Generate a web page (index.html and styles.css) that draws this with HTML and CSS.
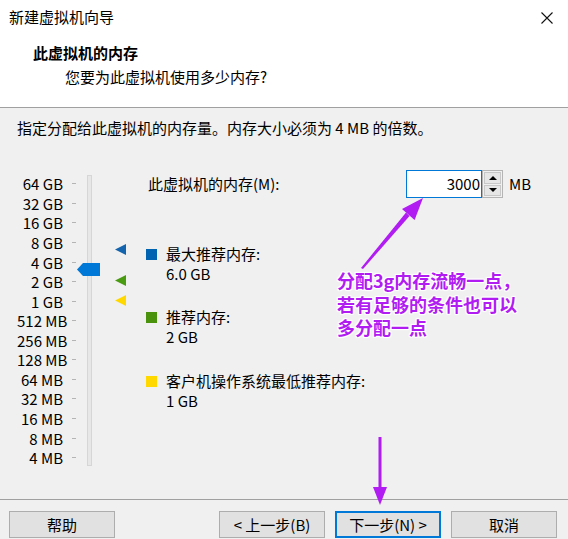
FILE: index.html
```html
<!DOCTYPE html>
<html lang="zh-CN">
<head>
<meta charset="utf-8">
<title>新建虚拟机向导</title>
<link rel="stylesheet" href="styles.css">
</head>
<body>
<div class="window">
  <div class="header">
    <div class="titlebar">
      <span class="title">新建虚拟机向导</span>
      <svg class="close" width="12" height="12" viewBox="0 0 12 12"><path d="M0.5 0.5 L11.5 11.5 M11.5 0.5 L0.5 11.5" stroke="#111" stroke-width="1.1" fill="none"/></svg>
    </div>
    <div class="head-title">此虚拟机的内存</div>
    <div class="head-sub">您要为此虚拟机使用多少内存?</div>
  </div>
  <div class="content">
    <div class="intro">指定分配给此虚拟机的内存量。内存大小必须为 4 MB 的倍数。</div>
    <div class="body">
      <div class="scale">
        <div class="row"><span class="lbl">64 GB</span><span class="tick"></span></div>
        <div class="row"><span class="lbl">32 GB</span><span class="tick"></span></div>
        <div class="row"><span class="lbl">16 GB</span><span class="tick"></span></div>
        <div class="row"><span class="lbl">8 GB</span><span class="tick"></span></div>
        <div class="row"><span class="lbl">4 GB</span><span class="tick"></span></div>
        <div class="row"><span class="lbl">2 GB</span><span class="tick"></span></div>
        <div class="row"><span class="lbl">1 GB</span><span class="tick"></span></div>
        <div class="row"><span class="lbl">512 MB</span><span class="tick"></span></div>
        <div class="row"><span class="lbl">256 MB</span><span class="tick"></span></div>
        <div class="row"><span class="lbl">128 MB</span><span class="tick"></span></div>
        <div class="row"><span class="lbl">64 MB</span><span class="tick"></span></div>
        <div class="row"><span class="lbl">32 MB</span><span class="tick"></span></div>
        <div class="row"><span class="lbl">16 MB</span><span class="tick"></span></div>
        <div class="row"><span class="lbl">8 MB</span><span class="tick"></span></div>
        <div class="row"><span class="lbl">4 MB</span><span class="tick"></span></div>
        <div class="track"></div>
        <div class="thumb"></div>
        <div class="marker m-max"></div>
        <div class="marker m-rec"></div>
        <div class="marker m-min"></div>
      </div>
      <div class="right">
        <div class="mem-row">
          <span class="mem-label">此虚拟机的内存(M):</span>
          <span class="input">3000</span>
          <span class="spin">
            <span class="spin-btn"><span class="tri-up"></span></span>
            <span class="spin-btn"><span class="tri-down"></span></span>
          </span>
          <span class="unit">MB</span>
        </div>
        <div class="legend first">
          <span class="sq sq-blue"></span>
          <div class="ltext">最大推荐内存:<br>6.0 GB</div>
        </div>
        <div class="legend">
          <span class="sq sq-green"></span>
          <div class="ltext">推荐内存:<br>2 GB</div>
        </div>
        <div class="legend third">
          <span class="sq sq-yellow"></span>
          <div class="ltext">客户机操作系统最低推荐内存:<br>1 GB</div>
        </div>
      </div>
    </div>
  </div>
  <div class="footer">
    <button class="btn">帮助</button>
    <div class="btn-group">
      <button class="btn">&lt; 上一步(B)</button>
      <button class="btn default">下一步(N) &gt;</button>
      <button class="btn">取消</button>
    </div>
  </div>
  <div class="note">分配3g内存流畅一点，<br>若有足够的条件也可以<br>多分配一点</div>
  <svg class="arrows" width="568" height="539" viewBox="0 0 568 539">
    <polygon points="361,268 363,269 409.5,216 406,212.5" fill="#b01cf2"/>
    <polygon points="423,198 414.6,220 402,209" fill="#b01cf2"/>
    <rect x="378.5" y="437" width="3" height="52" fill="#b01cf2"/>
    <polygon points="373,487 387,487 380,505" fill="#b01cf2"/>
  </svg>
</div>
</body>
</html>
```
FILE: styles.css
```css
* { box-sizing: border-box; }
html, body { margin: 0; padding: 0; }
body {
  width: 568px;
  height: 539px;
  overflow: hidden;
  background: #f0f0f0;
  font-family: "Noto Sans CJK SC", "Noto Sans", sans-serif;
  font-size: 15px;
  color: #000;
}
.window { position: relative; width: 568px; height: 539px; }

.header {
  height: 108px;
  background: #fff;
  border-bottom: 1px solid #a0a0a0;
}
.titlebar {
  height: 34px;
  display: flex;
  align-items: center;
  justify-content: space-between;
  padding: 0 15px 0 9px;
}
.title { line-height: 20px; color: #000; }
.close { display: block; margin-top: 1px; }
.head-title {
  margin-top: 9px;
  padding-left: 33px;
  font-weight: bold;
  line-height: 20px;
}
.head-sub {
  margin-top: 4px;
  padding-left: 65px;
  line-height: 20px;
}

.content {
  height: 391px;
  padding: 10px 0 0 17px;
}
.intro { line-height: 20px; }
.body {
  display: flex;
  margin-top: 32px;
}
.scale {
  position: relative;
  width: 129px;
  padding-top: 4px;
}
.row {
  display: flex;
  align-items: center;
  height: 19.57px;
}
.lbl {
  width: 46px;
  text-align: right;
  white-space: nowrap;
  line-height: 19px;
  color: #000;
}
.tick {
  width: 4px;
  height: 1px;
  margin-left: 9px;
  background: #b4b4b4;
}
.track {
  position: absolute;
  left: 70px;
  top: 5px;
  width: 5px;
  height: 291px;
  background: #e7e7e7;
  border: 1px solid #d6d6d6;
}
.thumb {
  position: absolute;
  left: 60px;
  top: 93px;
  width: 23px;
  height: 13px;
  background: #0078d7;
  clip-path: polygon(0 50%, 6px 0, 100% 0, 100% 100%, 6px 100%);
}
.marker {
  position: absolute;
  left: 98px;
  width: 11px;
  height: 11px;
  clip-path: polygon(0 50%, 100% 0, 100% 100%);
}
.m-max { top: 74px; background: #1464ad; }
.m-rec { top: 105px; background: #4a9a12; }
.m-min { top: 125px; background: #ffd800; }

.right { flex: 1; }
.mem-row {
  display: flex;
  align-items: center;
  height: 28px;
}
.mem-label {
  width: 260px;
  padding-left: 2px;
  line-height: 20px;
}
.input {
  width: 76px;
  height: 28px;
  border: 1px solid #0078d7;
  background: #fff;
  text-align: right;
  padding-right: 1px;
  line-height: 26px;
}
.spin {
  display: flex;
  flex-direction: column;
  width: 21px;
  height: 28px;
  border: 1px solid #b4b4b4;
  background: #f0f0f0;
  padding: 1px;
  gap: 1px;
}
.spin-btn {
  flex: 1;
  display: flex;
  align-items: center;
  justify-content: center;
  background: #e6e6e6;
  border: 1px solid #c8c8c8;
}
.tri-up, .tri-down {
  width: 0; height: 0;
  border-left: 4px solid transparent;
  border-right: 4px solid transparent;
}
.tri-up { border-bottom: 4px solid #000; }
.tri-down { border-top: 4px solid #000; }
.unit { margin-left: 6px; line-height: 20px; }

.legend {
  display: flex;
  margin-top: 23px;
}
.legend.first { margin-top: 46px; }
.legend.third { margin-top: 24px; }
.sq {
  width: 11px;
  height: 11px;
  margin-top: 5px;
  margin-right: 9px;
  flex: none;
}
.sq-blue { background: #0063b1; }
.sq-green { background: #4a920c; }
.sq-yellow { background: #ffd800; }
.ltext { line-height: 20px; }

.footer {
  height: 40px;
  border-top: 1px solid #a0a0a0;
  display: flex;
  align-items: flex-start;
  padding: 11px 11px 0 9px;
}
.btn-group {
  margin-left: auto;
  display: flex;
  gap: 10px;
}
.btn {
  width: 106px;
  height: 27px;
  font-family: inherit;
  font-size: 15px;
  line-height: 20px;
  color: #000;
  background: #e1e1e1;
  border: 1px solid #adadad;
  padding: 0;
  margin: 0;
}
.btn.default { border: 2px solid #0078d7; }

.note {
  position: absolute;
  left: 337px;
  top: 269px;
  font-size: 18px;
  font-weight: bold;
  line-height: 23.5px;
  color: #b01cf2;
  white-space: nowrap;
  text-shadow: 1px 0 0 #fff, -1px 0 0 #fff, 0 1px 0 #fff, 0 -1px 0 #fff, 1px 1px 1px #fff, -1px -1px 1px #fff, 1px -1px 1px #fff, -1px 1px 1px #fff;
}
.arrows {
  position: absolute;
  left: 0;
  top: 0;
  pointer-events: none;
}
```
